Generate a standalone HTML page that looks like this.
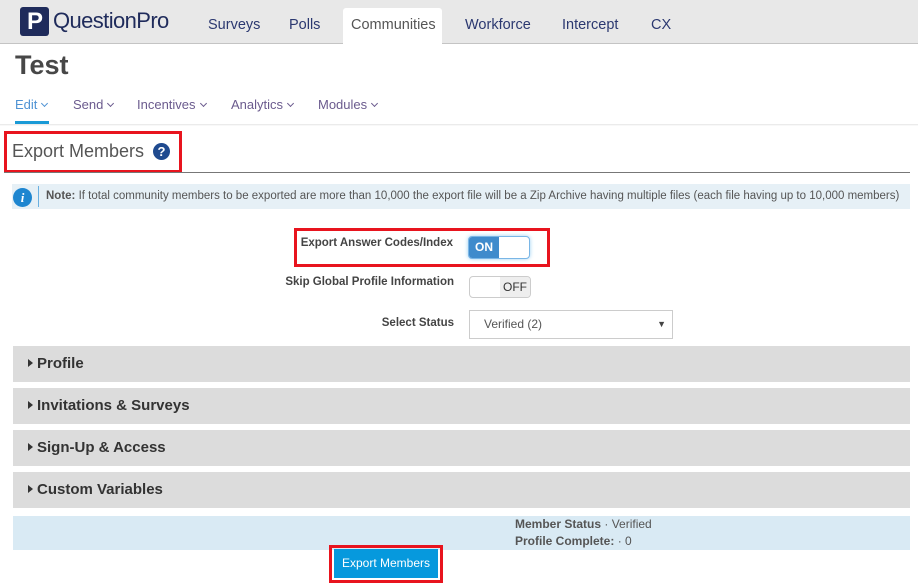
<!DOCTYPE html>
<html><head><meta charset="utf-8"><style>
*{margin:0;padding:0;box-sizing:border-box}
body{width:918px;height:586px;overflow:hidden;background:#fff;font-family:"Liberation Sans",sans-serif;color:#444;position:relative}
.a{position:absolute;white-space:nowrap}
.hdr{position:absolute;left:0;top:0;width:918px;height:44px;background:#e8e8e8;border-bottom:1px solid #c4c4c4}
.nav{position:absolute;top:17px;font-size:14.5px;color:#2b3870}
.sub{position:absolute;top:97px;font-size:13px;color:#6b5b8e}
.chev{display:inline-block;width:5px;height:5px;border-right:1px solid currentColor;border-bottom:1px solid currentColor;transform:rotate(45deg);margin-left:5px;position:relative;top:-3px}
.red{position:absolute;border:3px solid #e8141e}
.acc{position:absolute;left:13px;width:897px;height:36px;background:#dcdcdc;font-weight:bold;font-size:15px;color:#333;padding:9px 0 0 14px}
.acc:before{content:"";position:absolute;left:15px;top:13px;border-left:5px solid #333;border-top:4px solid transparent;border-bottom:4px solid transparent}
.acc span{margin-left:10px}
.lbl{position:absolute;font-size:11.5px;font-weight:bold;color:#444;text-align:right}
</style></head><body>
<div class="hdr"></div>
<div class="a" style="left:343px;top:8px;width:99px;height:37px;background:#fff;border-radius:3px 3px 0 0"></div>
<div class="a" style="left:20px;top:7px;width:29px;height:29px;background:#1f2b5b;border-radius:3px"></div>
<div class="a" style="left:27px;top:9px;color:#fff;font-weight:bold;font-size:24px;line-height:26px">P</div>
<div class="a" style="left:53px;top:8px;font-size:22px;color:#1f2b5b;letter-spacing:-0.6px">QuestionPro</div>
<div class="nav" style="left:208px">Surveys</div>
<div class="nav" style="left:289px">Polls</div>
<div class="nav" style="left:351px;color:#555;font-size:14.5px">Communities</div>
<div class="nav" style="left:465px">Workforce</div>
<div class="nav" style="left:562px">Intercept</div>
<div class="nav" style="left:651px">CX</div>
<div class="a" style="left:15px;top:50px;font-size:27px;font-weight:bold;color:#474747">Test</div>
<div class="sub" style="left:15px;color:#4f93d4">Edit<i class="chev"></i></div>
<div class="sub" style="left:73px">Send<i class="chev"></i></div>
<div class="sub" style="left:137px">Incentives<i class="chev"></i></div>
<div class="sub" style="left:231px">Analytics<i class="chev"></i></div>
<div class="sub" style="left:318px">Modules<i class="chev"></i></div>
<div class="a" style="left:15px;top:121px;width:34px;height:3px;background:#1a9ad6"></div>
<div class="a" style="left:0;top:124px;width:918px;height:2px;background:linear-gradient(#e4e4e4,#fff)"></div>
<div class="red" style="left:4px;top:131px;width:178px;height:42px"></div>
<div class="a" style="left:12px;top:141px;font-size:18px;color:#555">Export Members</div>
<div class="a" style="left:153px;top:143px;width:17px;height:17px;border-radius:50%;background:#1f4a8f;color:#fff;font-weight:bold;font-size:13px;text-align:center;line-height:17px">?</div>
<div class="a" style="left:4px;top:172px;width:906px;height:1px;background:#777"></div>
<div class="a" style="left:12px;top:184px;width:898px;height:25px;background:#e6f0f6"></div>
<div class="a" style="left:13px;top:188px;width:19px;height:19px;border-radius:50%;background:#1e86d0;color:#fff;font:italic bold 13px 'Liberation Serif',serif;text-align:center;line-height:19px">i</div>
<div class="a" style="left:38px;top:186px;width:1px;height:21px;background:#6ab0e0"></div>
<div class="a" style="left:46px;top:190px;font-size:11.5px;color:#555"><b>Note:</b> If total community members to be exported are more than 10,000 the export file will be a Zip Archive having multiple files (each file having up to 10,000 members)</div>
<div class="red" style="left:294px;top:228px;width:256px;height:39px"></div>
<div class="lbl" style="left:280px;width:173px;top:237px">Export Answer Codes/Index</div>
<div class="a" style="left:468px;top:236px;width:62px;height:23px;border:1px solid #7ab6e6;border-radius:4px;background:#fff;box-shadow:0 0 4px #9cd0f4;overflow:hidden">
<div style="width:30px;height:100%;background:#3f8bcc;color:#fff;font-size:12px;font-weight:bold;text-align:center;line-height:21px">ON</div></div>
<div class="lbl" style="left:250px;width:204px;top:276px">Skip Global Profile Information</div>
<div class="a" style="left:469px;top:276px;width:62px;height:22px;border:1px solid #ccc;border-radius:4px;background:#fff;overflow:hidden">
<div style="position:absolute;right:0;top:0;width:30px;height:100%;background:#eee;font-size:12px;color:#333;text-align:center;line-height:20px">OFF</div></div>
<div class="lbl" style="left:300px;width:154px;top:317px">Select Status</div>
<div class="a" style="left:469px;top:310px;width:204px;height:29px;border:1px solid #ccc;background:#fff;font-size:12px;color:#555;padding:6px 0 0 14px">Verified (2)<span style="position:absolute;right:6px;top:8px;font-size:9px;color:#444">▼</span></div>
<div class="acc" style="top:346px"><span>Profile</span></div>
<div class="acc" style="top:388px"><span>Invitations &amp; Surveys</span></div>
<div class="acc" style="top:430px"><span>Sign-Up &amp; Access</span></div>
<div class="acc" style="top:472px"><span>Custom Variables</span></div>
<div class="a" style="left:13px;top:516px;width:897px;height:34px;background:#d9eaf4"></div>
<div class="a" style="left:515px;top:516px;font-size:12px;color:#555;line-height:17px"><b>Member Status</b> · Verified<br><b>Profile Complete:</b> · 0</div>
<div class="red" style="left:329px;top:545px;width:114px;height:38px"></div>
<div class="a" style="left:334px;top:549px;width:104px;height:29px;background:#0699dd;color:#fff;font-size:12px;text-align:center;line-height:29px">Export Members</div>
</body></html>
